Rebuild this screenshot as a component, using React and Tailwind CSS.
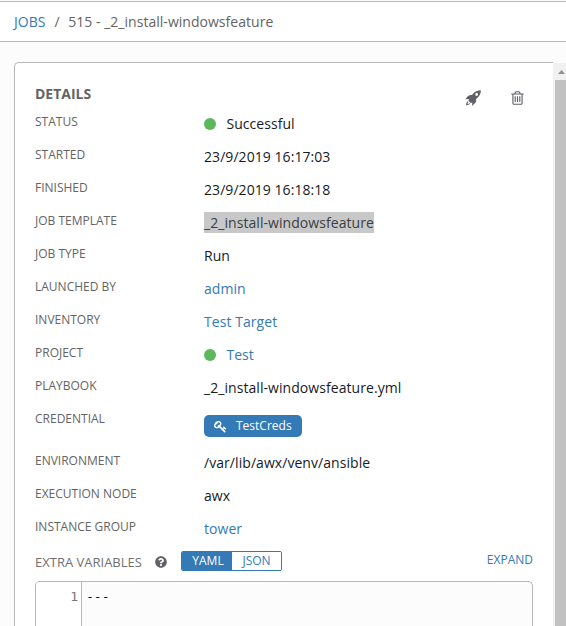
import React from "react";
import { FaQuestionCircle } from "react-icons/fa";

function Glyph({ d, width, className }) {
  return (
    <svg viewBox={`0 0 ${width} 1792`} className={className} fill="currentColor" aria-hidden="true">
      <path transform="translate(0 1536) scale(1 -1)" d={d} />
    </svg>
  );
}

const TRASH =
  "M512 800v-576q0 -14 -9 -23t-23 -9h-64q-14 0 -23 9t-9 23v576q0 14 9 23t23 9h64q14 0 23 -9t9 -23zM768 800v-576q0 -14 -9 -23t-23 -9h-64q-14 0 -23 9t-9 23v576q0 14 9 23t23 9h64q14 0 23 -9t9 -23zM1024 800v-576q0 -14 -9 -23t-23 -9h-64q-14 0 -23 9t-9 23v576q0 14 9 23t23 9h64q14 0 23 -9t9 -23zM1152 76v948h-896v-948q0 -22 7 -40.5t14.5 -27t10.5 -8.5h832q3 0 10.5 8.5t14.5 27t7 40.5zM480 1152h448l-48 117q-7 9 -17 11h-317q-10 -2 -17 -11zM1408 1120v-64q0 -14 -9 -23t-23 -9h-96v-948q0 -83 -47 -143.5t-113 -60.5h-832q-66 0 -113 58.5t-47 141.5v952h-96q-14 0 -23 9t-9 23v64q0 14 9 23t23 9h309l70 167q15 37 54 63t79 26h320q40 0 79 -26t54 -63l70 -167h309q14 0 23 -9t9 -23z";
const KEY =
  "M832 1024q0 80 -56 136t-136 56t-136 -56t-56 -136q0 -42 19 -83q-41 19 -83 19q-80 0 -136 -56t-56 -136t56 -136t136 -56t136 56t56 136q0 42 -19 83q41 -19 83 -19q80 0 136 56t56 136zM1683 320q0 -17 -49 -66t-66 -49q-9 0 -28.5 16t-36.5 33t-38.5 40t-24.5 26l-96 -96l220 -220q28 -28 28 -68q0 -42 -39 -81t-81 -39q-40 0 -68 28l-671 671q-176 -131 -365 -131q-163 0 -265.5 102.5t-102.5 265.5q0 160 95 313t248 248t313 95q163 0 265.5 -102.5t102.5 -265.5q0 -189 -131 -365l355 -355l96 96q-3 3 -26 24.5t-40 38.5t-33 36.5t-16 28.5q0 17 49 66t66 49q13 0 23 -10q6 -6 46 -44.5t82 -79.5t86.5 -86t73 -78t28.5 -41z";

function Rocket() {
  return (
    <svg viewBox="0 0 16 17" className="h-[17px] w-4" fill="currentColor" fillRule="evenodd" aria-hidden="true">
      <path d="M15.9.2C12.5.3 9.9 1.4 8 3.8L7 5C5 4.8 3.6 5.2 2.5 6.6L.3 9.3L4 9L3.4 10.8L5.7 13.1L7.3 12.4L7 15.9L9.6 13.6C11 12.3 11.3 11 11 9.2L12.2 8C14.8 5.8 15.9 3.5 15.9.2ZM13.1 4.5A1.4 1.4 0 1 1 10.3 4.5A1.4 1.4 0 1 1 13.1 4.5Z" />
      <path d="M2.8 11.3C1.5 12 1.2 13.4 1.1 15.3C3.1 15.2 4.4 14.8 5.1 13.6L4.2 13.2C3.8 13.8 3.3 14 2.5 14.1C2.6 13.2 2.8 12.7 3.4 12.2Z" />
    </svg>
  );
}

function Row({ label, children, className = "h-[33px]" }) {
  return (
    <div className={`flex shrink-0 items-start ${className}`}>
      <div className="w-[169px] shrink-0 pt-[5px] text-[12px] leading-[18px] text-[#646464]">{label}</div>
      <div className="flex items-center pt-[6px] text-[14px] leading-5 tracking-[0.06px] text-[#161b1f]">{children}</div>
    </div>
  );
}

function Dot() {
  return <span className="mr-[10px] size-[12.4px] rounded-full bg-[#5cb85c]" />;
}

function Link({ children }) {
  return <a className="text-[#337ab7]">{children}</a>;
}

export default function App() {
  return (
    <div className="flex h-[626px] w-[566px] flex-col overflow-hidden bg-[#fcfcfc] font-['Open_Sans',sans-serif]">
      <header className="mt-px flex h-[41px] shrink-0 items-center border-y border-[#b7b7b7] bg-white pl-[14px] text-[14px] leading-5 tracking-[0.03px] text-[#646464]">
        <a className="text-[#337ab7]">JOBS</a>
        <span className="pl-[9px] pr-[8.5px]">/</span>
        <span>515 - _2_install-windowsfeature</span>
      </header>

      <div className="ml-[14px] mt-5 flex min-h-0 flex-1">
        <main className="flex min-w-0 flex-1 flex-col overflow-hidden rounded-tl-[5px] border-l border-t border-[#b7b7b7] bg-white pl-5 pr-5">
          <div className="flex h-[45px] shrink-0 justify-between">
            <h1 className="pt-[21px] text-[14px] font-bold leading-5 text-[#646464]">DETAILS</h1>
            <div className="flex gap-[30px] pr-[9px] pt-[27px] text-[#606268]">
              <Rocket />
              <Glyph d={TRASH} width={1408} className="h-4 w-[13px]" />
            </div>
          </div>

          <Row label="STATUS"><Dot />Successful</Row>
          <Row label="STARTED">23/9/2019 16:17:03</Row>
          <Row label="FINISHED">23/9/2019 16:18:18</Row>
          <Row label="JOB TEMPLATE">
            <span className="-mt-px h-[21px] bg-[#c8c8c8] pt-px text-[#3b3f42]">_2_install-windowsfeature</span>
          </Row>
          <Row label="JOB TYPE">Run</Row>
          <Row label="LAUNCHED BY"><Link>admin</Link></Row>
          <Row label="INVENTORY"><Link>Test Target</Link></Row>
          <Row label="PROJECT"><Dot /><Link>Test</Link></Row>
          <Row label="PLAYBOOK">_2_install-windowsfeature.yml</Row>
          <Row label="CREDENTIAL" className="h-[42px]">
            <span className="mt-1 flex h-[22px] w-[98px] items-center rounded-[5px] bg-[#337ab7] pl-[10px] text-[12px] tracking-normal text-white">
              <Glyph d={KEY} width={1792} className="mr-[9px] size-[13px]" />
              TestCreds
            </span>
          </Row>
          <Row label="ENVIRONMENT">/var/lib/awx/venv/ansible</Row>
          <Row label="EXECUTION NODE">awx</Row>
          <Row label="INSTANCE GROUP"><Link>tower</Link></Row>

          <div className="flex h-[35px] shrink-0 items-start text-[12px] leading-[18px]">
            <span className="w-[120px] pt-[7px] text-[13px] text-[#707070]">EXTRA VARIABLES</span>
            <FaQuestionCircle className="mt-[10px] size-3 text-[#606268]" />
            <div className="ml-[14px] mt-[5px] flex h-5 w-[101px] overflow-hidden rounded-[2px] border border-[#337ab7]">
              <button className="w-[50px] bg-[#337ab7] pl-[2px] leading-[18px] text-white">YAML</button>
              <button className="flex-1 bg-white leading-[18px] text-[#337ab7]">JSON</button>
            </div>
            <a className="ml-auto pt-[5px] text-[#337ab7]">EXPAND</a>
          </div>

          <div className="flex min-h-0 flex-1 overflow-hidden rounded-t-[5px] border-x border-t border-[#b7b7b7] bg-[#fcfcfc] font-['DejaVu_Sans_Mono',monospace] text-[13px] leading-[18px]">
            <div className="w-[46px] shrink-0 border-r border-[#b7b7b7] bg-white pr-[3px] pt-[6px] text-right text-[#777]">1</div>
            <div className="pl-1 pt-[6px] text-[#00c]">---</div>
          </div>
        </main>

        <div className="mt-px flex w-[13px] shrink-0 flex-col overflow-hidden bg-[#f1f1f1]">
          <div className="flex h-[17px] shrink-0 items-center pl-[5px]">
            <svg viewBox="0 0 7 4" className="h-1 w-[7px] shrink-0 fill-[#909090]"><path d="M0 4L3.5 0L7 4Z" /></svg>
          </div>
          <div className="ml-[2px] flex-1 bg-[#c1c1c1]" />
        </div>
      </div>
    </div>
  );
}
